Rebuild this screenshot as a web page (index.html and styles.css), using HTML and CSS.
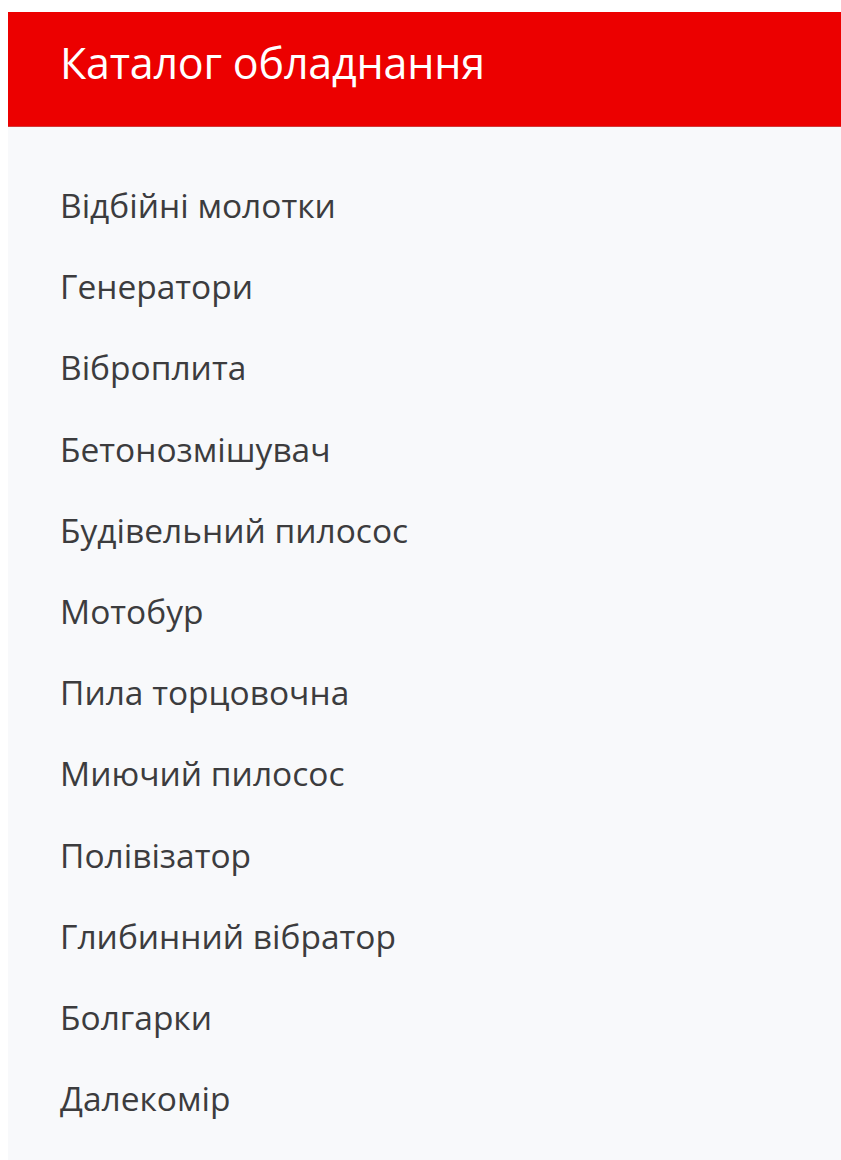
FILE: index.html
```html
<!DOCTYPE html>
<html lang="uk">
<head>
<meta charset="utf-8">
<title>Каталог обладнання</title>
<link rel="stylesheet" href="styles.css">
</head>
<body>
<aside class="catalog">
  <h2 class="catalog-title">Каталог обладнання</h2>
  <ul class="catalog-list">
    <li><a href="#">Відбійні молотки</a></li>
    <li><a href="#">Генератори</a></li>
    <li><a href="#">Віброплита</a></li>
    <li><a href="#">Бетонозмішувач</a></li>
    <li><a href="#">Будівельний пилосос</a></li>
    <li><a href="#">Мотобур</a></li>
    <li><a href="#">Пила торцовочна</a></li>
    <li><a href="#">Миючий пилосос</a></li>
    <li><a href="#">Полівізатор</a></li>
    <li><a href="#">Глибинний вібратор</a></li>
    <li><a href="#">Болгарки</a></li>
    <li><a href="#">Далекомір</a></li>
  </ul>
</aside>
</body>
</html>
```
FILE: styles.css
```css
html, body {
  margin: 0;
  padding: 0;
  background: #ffffff;
}

body {
  padding: 12px 0 0 8px;
  font-family: "Open Sans", "Noto Sans", sans-serif;
}

.catalog {
  background: #f8f9fb;
  min-height: 1148px;
}

.catalog-title {
  margin: 0;
  height: 115px;
  box-sizing: border-box;
  padding: 0 0 14px 52px;
  display: flex;
  align-items: center;
  background: #ec0000;
  color: #ffffff;
  font-size: 43px;
  font-weight: 400;
  letter-spacing: -0.2px;
  border-bottom: 1px solid #d23a3a;
}

.catalog-list {
  list-style: none;
  margin: 0;
  padding: 58px 0 0 52px;
}

.catalog-list li {
  height: 81.2px;
  display: flex;
  align-items: flex-start;
}

.catalog-list a {
  color: #3c3c3e;
  text-decoration: none;
  font-size: 33.5px;
  line-height: 40px;
}
```
